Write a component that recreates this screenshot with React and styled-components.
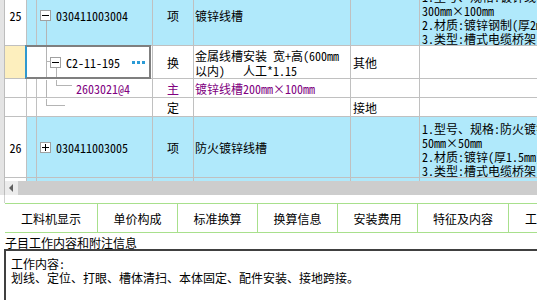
import React from 'react';
import styled, { createGlobalStyle } from 'styled-components';

const BLUE = '#b0e9fb';
const YELLOW = '#fdefbe';
const PURPLE = '#800080';
const LINE = '#c0c0c0';
const GREEN = '#a8e08c';
const FONT = `"Noto Sans Mono CJK SC", "Noto Sans CJK SC", "Liberation Mono", monospace`;

const Global = createGlobalStyle`
  html, body { margin: 0; padding: 0; background: #fff; overflow: hidden; }
  #root { width: 537px; height: 300px; }
`;

const Page = styled.div`
  width: 537px;
  height: 300px;
  overflow: hidden;
  display: flex;
  flex-direction: column;
  font-family: ${FONT};
  font-size: 12px;
  color: #000;
  background: #fff;
`;

const Upper = styled.div`
  display: flex;
  height: 195px;
  flex: none;
`;

const Gutter = styled.div`
  width: 4px;
  flex: none;
  background: #e4e4e4;
  border-right: 1px solid #bdbdbd;
`;

const Main = styled.div`
  flex: 1;
  min-width: 0;
  display: flex;
  flex-direction: column;
`;

const Viewport = styled.div`
  height: 181px;
  flex: none;
  overflow: hidden;
`;

const Grid = styled.div`
  display: grid;
  grid-template-columns: 22px 126px 41px 157px 69px 240px;
  grid-template-rows: 61px 33px 19px 19px 61px 20px;
  margin-top: -15px;
`;

const Cell = styled.div`
  box-sizing: border-box;
  border-right: 1px solid ${LINE};
  border-bottom: 1px solid ${LINE};
  background: ${(p) => p.$bg || '#fff'};
  color: ${(p) => p.$color || '#000'};
  display: flex;
  align-items: center;
  justify-content: ${(p) => (p.$center ? 'center' : 'flex-start')};
  padding-left: ${(p) => p.$pad || 0}px;
  padding-top: ${(p) => p.$padTop || 0}px;
  overflow: hidden;
  white-space: nowrap;
  line-height: 15px;
`;

const TreeCell = styled.div`
  box-sizing: border-box;
  position: relative;
  display: flex;
  border-right: 1px solid ${LINE};
  border-bottom: 1px solid ${LINE};
  background: ${(p) => p.$bg || '#fff'};
`;

const Narrow = styled.div`
  width: 9px;
  flex: none;
  border-right: 1px solid ${(p) => (p.$hide ? 'transparent' : LINE)};
`;

const CodeArea = styled.div`
  position: relative;
  flex: 1;
  display: flex;
  align-items: center;
  gap: 5px;
  padding-left: ${(p) => p.$indent}px;
  color: ${(p) => p.$color || '#000'};
  white-space: nowrap;
  line-height: 15px;
`;

const Connectors = styled.svg`
  position: absolute;
  left: 0;
  top: 0;
  pointer-events: none;
`;

const Selection = styled.div`
  position: absolute;
  left: -2px;
  top: -1px;
  right: 1px;
  bottom: -1px;
  border: 2px solid #7f7f7f;
  border-left: 2px solid #2f98cf;
  pointer-events: none;
`;

const Dots = styled.svg`
  margin-left: auto;
  margin-right: 6px;
  flex: none;
`;

const Lines = styled.div`
  display: flex;
  flex-direction: column;
  line-height: ${(p) => p.$lh || 15}px;
  white-space: pre;
`;

const FeatCell = styled(Cell)`
  border-right: none;
  padding-left: 2px;
  padding-top: 5px;
  align-items: flex-start;
`;

const ScrollBar = styled.div`
  height: 14px;
  flex: none;
  display: flex;
  background: #cdcdcd;
`;

const ArrowBtn = styled.div`
  width: 13px;
  flex: none;
  background: #ececec;
  display: flex;
  align-items: center;
  justify-content: center;
`;

const Spacer = styled.div`
  height: 8px;
  flex: none;
  margin-left: 4px;
  border-left: 1px solid #d0d0d0;
`;

const TabBar = styled.div`
  display: flex;
  flex: none;
  height: 28px;
  margin-left: 5px;
  border-top: 1px solid ${GREEN};
  border-bottom: 1px solid ${GREEN};
`;

const Tab = styled.div`
  box-sizing: border-box;
  width: ${(p) => p.$w}px;
  flex: none;
  border-right: 1px solid ${GREEN};
  display: flex;
  align-items: center;
  justify-content: ${(p) => (p.$left ? 'flex-start' : 'center')};
  padding-left: ${(p) => (p.$left ? 16 : 0)}px;
  padding-top: 1px;
  white-space: nowrap;
  overflow: hidden;
`;

const LabelRow = styled.div`
  height: 16px;
  flex: none;
  padding-left: 5px;
  box-sizing: border-box;
  padding-top: 1px;
`;

const Label = styled.span`
  display: inline-block;
  line-height: 14px;
  border-bottom: 1px solid #000;
`;

const InfoBox = styled.div`
  flex: 1;
  margin-left: 4px;
  border-top: 2px solid #404040;
  border-left: 2px solid #404040;
  padding: 6px 0 0 5px;
  line-height: 14px;
  white-space: nowrap;
`;

const TreeBox = ({ kind }) => (
  <svg width="11" height="11" viewBox="0 0 11 11" shapeRendering="crispEdges" style={{ flex: 'none' }}>
    <rect x="0.5" y="0.5" width="10" height="10" fill="#fff" stroke="#a0a0a0" />
    <line x1="2" y1="5.5" x2="9" y2="5.5" stroke="#000" />
    {kind === 'plus' && <line x1="5.5" y1="2" x2="5.5" y2="9" stroke="#000" />}
  </svg>
);

const rows = [
  {
    key: 'r25', num: '25', bg: BLUE, indent: 3, box: 'minus', code: '030411003004',
    type: '项', name: ['镀锌线槽'], unit: '', h: 60,
    feat: ['1.型号、规格:镀锌线槽', '300mm×100mm', '2.材质:镀锌钢制(厚2mm)', '3.类型:槽式电缆桥架'],
    lines: [[9, 35, 9, 61]],
  },
  {
    key: 'c2', num: '', numBg: YELLOW, selected: true, indent: 13, box: 'minus', code: 'C2-11-195',
    dots: true, type: '换', name: ['金属线槽安装 宽+高(600mm', '以内)　 人工*1.15'], unit: '其他', h: 32,
    feat: [], lines: [[9, 0, 9, 33], [9, 15, 13, 15], [19, 21, 19, 33]], namePadTop: 1,
  },
  {
    key: 'm', num: '', indent: 39, code: '2603021@4', color: PURPLE, type: '主',
    name: ['镀锌线槽200mm×100mm'], unit: '', h: 18, feat: [],
    lines: [[9, 0, 9, 19], [19, 0, 19, 6], [19, 6, 34, 6]],
  },
  {
    key: 'd', num: '', indent: 39, code: '', type: '定', name: [''], unit: '接地', h: 18, feat: [],
    lines: [[9, 0, 9, 7], [9, 7, 27, 7]],
  },
  {
    key: 'r26', num: '26', bg: BLUE, indent: 3, box: 'plus', code: '030411003005',
    type: '项', name: ['防火镀锌线槽'], unit: '', h: 60,
    feat: ['1.型号、规格:防火镀锌线槽', '50mm×50mm', '2.材质:镀锌(厚1.5mm)', '3.类型:槽式电缆桥架'],
    lines: [],
  },
  { key: 'r27', num: '', bg: BLUE, indent: 3, code: '', type: '', name: [''], unit: '', h: 19, feat: [], lines: [] },
];

const tabs = [
  { t: '工料机显示', w: 93 },
  { t: '单价构成', w: 80 },
  { t: '标准换算', w: 80 },
  { t: '换算信息', w: 80 },
  { t: '安装费用', w: 80 },
  { t: '特征及内容', w: 91 },
  { t: '工程量明细', w: 100, left: true },
];

export default function App() {
  return (
    <Page>
      <Global />
      <Upper>
        <Gutter />
        <Main>
          <Viewport>
            <Grid>
              {rows.map((r) => (
                <React.Fragment key={r.key}>
                  <Cell $bg={r.numBg} $center>{r.num}</Cell>
                  <TreeCell $bg={r.selected ? '#fff' : r.bg}>
                    <Narrow $hide={r.selected} />
                    <CodeArea $indent={r.indent} $color={r.color}>
                      {r.lines.length > 0 && (
                        <Connectors width="116" height={r.h + 1} shapeRendering="crispEdges">
                          {r.lines.map(([x1, y1, x2, y2], i) => (
                            <line key={i} x1={x1 + 0.5} y1={y1 + 0.5} x2={x2 + 0.5} y2={y2 + 0.5} stroke="#b4b4b4" />
                          ))}
                        </Connectors>
                      )}
                      {r.box && <TreeBox kind={r.box} />}
                      {r.code && <span style={{ position: 'relative' }}>{r.code}</span>}
                      {r.dots && (
                        <Dots width="14" height="3" viewBox="0 0 14 3" shapeRendering="crispEdges">
                          <rect x="0" y="0" width="3" height="3" fill="#2b9bd6" />
                          <rect x="5" y="0" width="3" height="3" fill="#2b9bd6" />
                          <rect x="10" y="0" width="3" height="3" fill="#2b9bd6" />
                        </Dots>
                      )}
                    </CodeArea>
                    {r.selected && <Selection />}
                  </TreeCell>
                  <Cell $bg={r.bg} $center $color={r.color}>{r.type}</Cell>
                  <Cell $bg={r.bg} $pad={1} $padTop={r.namePadTop} $color={r.color}>
                    <Lines>{r.name.map((n, i) => <span key={i}>{n}</span>)}</Lines>
                  </Cell>
                  <Cell $bg={r.bg} $pad={2}>{r.unit}</Cell>
                  <FeatCell $bg={r.bg}>
                    <Lines $lh={14}>{r.feat.map((n, i) => <span key={i}>{n}</span>)}</Lines>
                  </FeatCell>
                </React.Fragment>
              ))}
            </Grid>
          </Viewport>
          <ScrollBar>
            <ArrowBtn>
              <svg width="5" height="8" viewBox="0 0 5 8">
                <polygon points="4,0 4,8 0,4" fill="#606060" />
              </svg>
            </ArrowBtn>
          </ScrollBar>
        </Main>
      </Upper>
      <Spacer />
      <TabBar>
        {tabs.map((t) => (
          <Tab key={t.t} $w={t.w} $left={t.left}>{t.t}</Tab>
        ))}
      </TabBar>
      <LabelRow>
        <Label>子目工作内容和附注信息</Label>
      </LabelRow>
      <InfoBox>
        <div>工作内容:</div>
        <div>划线、定位、打眼、槽体清扫、本体固定、配件安装、接地跨接。</div>
      </InfoBox>
    </Page>
  );
}
